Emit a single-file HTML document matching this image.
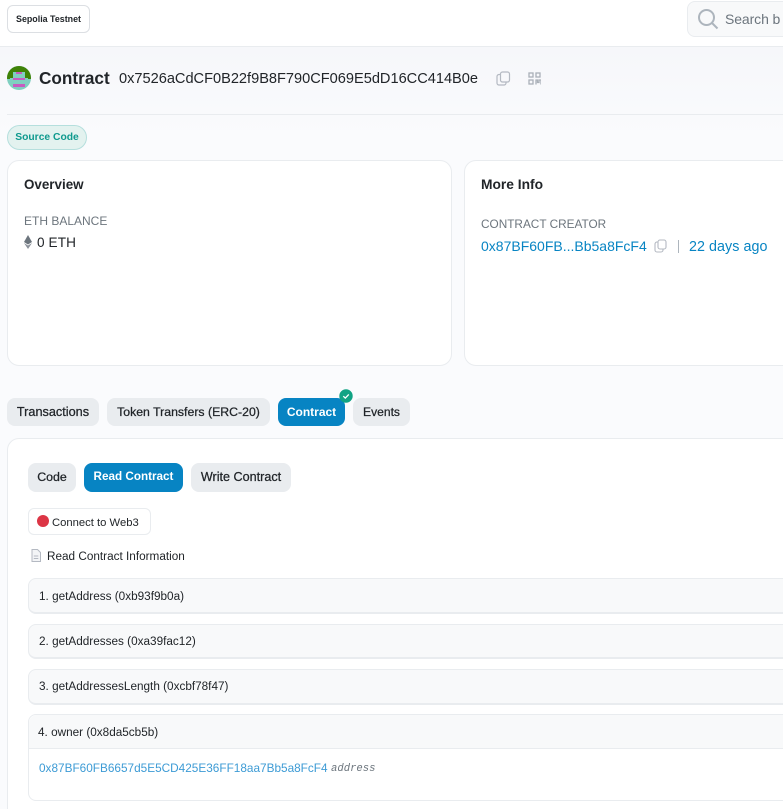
<!DOCTYPE html>
<html><head><meta charset="utf-8">
<style>
html,body{margin:0;padding:0;overflow:hidden;width:783px;height:809px}
body{background:#fafbfd;font-family:"Liberation Sans",sans-serif;color:#212529}
#w{position:absolute;left:0;top:0;width:783px;height:809px;overflow:hidden;background:#fafbfd}
.a{position:absolute;white-space:nowrap}
.card{position:absolute;background:#fff;border:1px solid #e9ecef;border-radius:12px;box-sizing:border-box}
.pill{position:absolute;box-sizing:border-box;border-radius:8px;background:#e9ecef;color:#212529;font-size:12.3px;text-align:center;white-space:nowrap;-webkit-text-stroke:.25px #212529}
.on{background:#0784c3;color:#fff;font-weight:bold;font-size:11.7px;-webkit-text-stroke:0}
.row{position:absolute;left:28px;width:780px;box-sizing:border-box;background:#f8f9fa;border:1px solid #e9ecef;border-bottom-width:2px;border-radius:8px 0 0 8px;font-size:11.75px;color:#212529;padding-left:10px}
</style></head><body><div id="w">
<div class="a" style="left:0;top:0;width:783px;height:46px;background:#fff;border-bottom:1px solid #e9ecef"></div>
<div class="a" style="left:0;top:47px;width:783px;height:90px;background:linear-gradient(#f6f7fa,#fafbfd)"></div>

<div class="a" style="left:7px;top:5px;width:83px;height:28px;box-sizing:border-box;background:#fff;border:1px solid #dcdfe3;border-radius:6px;font-size:8.9px;font-weight:bold;line-height:26px;text-align:center;color:#212529">Sepolia Testnet</div>

<div class="a" style="left:687px;top:1px;width:110px;height:36px;box-sizing:border-box;background:#f8f9fa;border:1px solid #e9ecef;border-radius:8px"></div>
<svg class="a" style="left:697px;top:8px" width="22" height="22" viewBox="0 0 22 22" fill="none" stroke="#adb5bd" stroke-width="2"><circle cx="9.500" cy="9.500" r="7.500"/><path d="M15 15l5.500 5.500"/></svg>
<div class="a" style="left:725px;top:10px;font-size:14px;line-height:18px;color:#6c757d;letter-spacing:-.1px">Search b</div>

<svg class="a" style="left:7px;top:66px" width="24" height="24" viewBox="0 0 24 24" shape-rendering="crispEdges">
<defs><clipPath id="c"><circle cx="12" cy="12" r="12"/></clipPath></defs>
<g clip-path="url(#c)"><rect width="24" height="24" fill="#7fcfc0"/>
<rect x="0" y="0" width="24" height="12" fill="#3f8207"/>
<rect x="6" y="6" width="12" height="6" fill="#7fcfc0"/>
<rect x="9" y="6" width="6" height="2" fill="#c65cc0"/>
<rect x="0" y="12" width="3" height="1" fill="#3f8207"/><rect x="21" y="12" width="3" height="1" fill="#3f8207"/>
<rect x="6" y="12" width="12" height="2" fill="#c65cc0"/>
<rect x="9" y="14" width="6" height="4" fill="#7fcfc0"/>
<rect x="6" y="18" width="12" height="3" fill="#c65cc0"/></g></svg>

<div class="a" style="left:39px;top:66px;font-size:17.2px;line-height:24px;font-weight:bold;color:#212529">Contract</div>
<div class="a" style="left:119px;top:69px;font-size:14.6px;line-height:20px;letter-spacing:-.01px;color:#212529">0x7526aCdCF0B22f9B8F790CF069E5dD16CC414B0e</div>

<svg class="a" style="left:496px;top:71px" width="15" height="15" viewBox="0 0 15 15" fill="none" stroke="#b4b9c2" stroke-width="1.200"><rect x="4.500" y="1" width="9" height="10" rx="2"/><path d="M4.500 3.500H3A2 2 0 0 0 1 5.500V12a2 2 0 0 0 2 2h5a2 2 0 0 0 2-2v-1"/></svg>
<svg class="a" style="left:528px;top:72px" width="13" height="13" viewBox="0 0 13 13" fill="none" stroke="#aab0b8" stroke-width="1.300"><rect x="1" y="1" width="4" height="4"/><rect x="8" y="1" width="4" height="4"/><rect x="1" y="8" width="4" height="4"/><path d="M8 12.500V8h1.500v2.500h1.500V8h2v4.500"/></svg>

<div class="a" style="left:7px;top:114px;width:776px;height:1px;background:#e9ecef"></div>

<div class="a" style="left:7px;top:125px;width:80px;height:25px;box-sizing:border-box;background:#e3f2ef;border:1px solid #b5dfdd;border-radius:13px;font-size:10.3px;font-weight:bold;line-height:23px;text-align:center;color:#0f9a8e">Source Code</div>

<div class="card" style="left:7px;top:160px;width:445px;height:206px"></div>
<div class="a" style="left:24px;top:176px;font-size:13.4px;line-height:18px;font-weight:bold;color:#212529">Overview</div>
<div class="a" style="left:24px;top:213px;font-size:12px;line-height:16px;color:#6c757d">ETH BALANCE</div>
<svg class="a" style="left:24px;top:235px" width="8" height="14" viewBox="0 0 8 14"><path d="M4 0L8 7 4 9.500 0 7z" fill="#6c757d"/><path d="M0 8l4 6 4-6-4 2.500z" fill="#8a9099"/></svg>
<div class="a" style="left:37px;top:234px;font-size:13.6px;line-height:18px;color:#212529;letter-spacing:.1px">0 ETH</div>

<div class="card" style="left:464px;top:160px;width:340px;height:206px"></div>
<div class="a" style="left:481px;top:176px;font-size:13.800px;line-height:18px;font-weight:bold;color:#212529">More Info</div>
<div class="a" style="left:481px;top:216px;font-size:11.8px;line-height:16px;color:#6c757d">CONTRACT CREATOR</div>
<div class="a" style="left:481px;top:237px;font-size:14px;line-height:18px;color:#0784c3">0x87BF60FB...Bb5a8FcF4</div>
<svg class="a" style="left:654px;top:239px" width="13" height="14" viewBox="0 0 13 14" fill="none" stroke="#b4b9c2" stroke-width="1.100"><rect x="4" y="1" width="8" height="9" rx="2"/><path d="M4 3H3A2 2 0 0 0 1 5v6a2 2 0 0 0 2 2h4a2 2 0 0 0 2-2v-1"/></svg>
<div class="a" style="left:678px;top:240px;width:1px;height:13px;background:#adb5bd"></div>
<div class="a" style="left:689px;top:238px;font-size:14.300px;line-height:18px;color:#0784c3;letter-spacing:.05px">22 days ago</div>

<div class="pill" style="left:7px;top:398px;width:92px;height:28px;line-height:28px;font-size:12.7px">Transactions</div>
<div class="pill" style="left:107px;top:398px;width:163px;height:28px;line-height:28px">Token Transfers (ERC-20)</div>
<div class="pill on" style="left:278px;top:398px;width:67px;height:28px;line-height:28px;font-size:12px">Contract</div>
<div class="pill" style="left:353px;top:398px;width:57px;height:28px;line-height:28px;font-size:12.1px">Events</div>
<svg class="a" style="left:339px;top:389px" width="14" height="14" viewBox="0 0 14 14"><circle cx="7" cy="7" r="6.700" fill="#11a384"/><path d="M4.300 7.200l2 1.900 3.500-3.700" fill="none" stroke="#fff" stroke-width="1.300"/></svg>

<div class="card" style="left:7px;top:438px;width:800px;height:400px"></div>

<div class="pill" style="left:28px;top:463px;width:48px;height:29px;line-height:28px;font-size:12.4px">Code</div>
<div class="pill on" style="left:84px;top:463px;width:99px;height:29px;line-height:28px;font-size:11.7px">Read Contract</div>
<div class="pill" style="left:191px;top:463px;width:100px;height:29px;line-height:28px;font-size:12.6px">Write Contract</div>

<div class="a" style="left:28px;top:508px;width:123px;height:27px;box-sizing:border-box;background:#fff;border:1px solid #e9ecef;border-radius:6px"></div>
<div class="a" style="left:37px;top:515px;width:12px;height:12px;border-radius:50%;background:#dc3545"></div>
<div class="a" style="left:52px;top:516px;font-size:11.25px;line-height:15px;color:#212529">Connect to Web3</div>

<svg class="a" style="left:31px;top:549px" width="10" height="13" viewBox="0 0 10 13" fill="none" stroke="#b4b9c2" stroke-width="1"><path d="M1 .5h5.500L9.500 3.500V12.500H1z" fill="#f3f4f6"/><path d="M2.800 7h4.500M2.800 9.500h4.500"/></svg>
<div class="a" style="left:47px;top:549px;font-size:11.75px;line-height:15px;color:#212529">Read Contract Information</div>

<div class="row" style="top:578px;height:36px;line-height:35px">1. getAddress (0xb93f9b0a)</div>
<div class="row" style="top:624px;height:35px;line-height:33px">2. getAddresses (0xa39fac12)</div>
<div class="row" style="top:669px;height:36px;line-height:33px">3. getAddressesLength (0xcbf78f47)</div>

<div class="a" style="left:28px;top:714px;width:780px;height:87px;box-sizing:border-box;background:#fff;border:1px solid #e9ecef;border-radius:8px"></div>
<div class="a" style="left:29px;top:715px;width:779px;height:34px;box-sizing:border-box;background:#f8f9fa;border-bottom:1px solid #e9ecef;border-radius:8px 0 0 0;font-size:11.75px;line-height:35px;padding-left:9px;color:#212529">4. owner (0x8da5cb5b)</div>
<div class="a" style="left:39px;top:760px;font-size:11.8px;line-height:17px;color:#3d9bd5">0x87BF60FB6657d5E5CD425E36FF18aa7Bb5a8FcF4</div>
<div class="a" style="left:331px;top:761px;font-family:'Liberation Mono',monospace;font-style:italic;font-size:10.6px;line-height:16px;color:#6c757d">address</div>
</div></body></html>
